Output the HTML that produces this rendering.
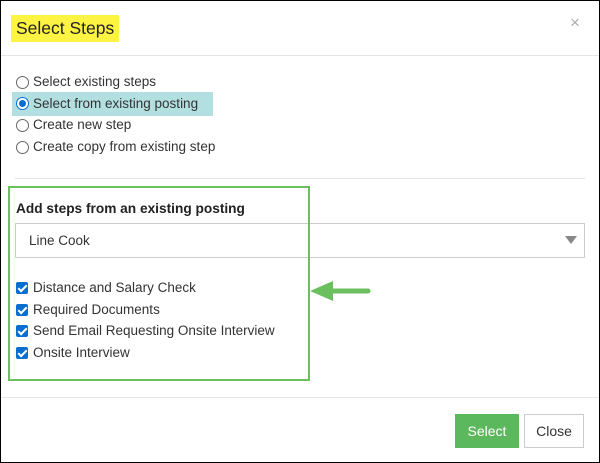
<!DOCTYPE html>
<html><head><style>
body{margin:0;width:600px;height:463px;overflow:hidden;font-family:"Liberation Sans",sans-serif;background:#fff;}
.frame{position:absolute;left:0;top:0;width:598px;height:461px;border:1px solid #000;}
.a{position:absolute;}
.t{font-size:13.5px;color:#333;}
.radio{position:absolute;width:11px;height:11px;border:1px solid #666;border-radius:50%;background:#fff;}
.cb{position:absolute;width:12px;height:12px;background:#0a6ed1;border-radius:2px;}
.cb:after{content:"";position:absolute;left:4px;top:1px;width:3px;height:7px;border:solid #fff;border-width:0 2px 2px 0;transform:rotate(45deg);}
</style></head><body>
<div class="frame"></div>
<div class="a" style="left:11px;top:15px;width:108px;height:27px;background:#fdf343;"></div>
<div class="a" style="left:16px;top:18px;font-size:17.5px;color:#222;">Select Steps</div>
<div class="a" style="left:570px;top:13px;font-size:17px;color:#aaa;">×</div>
<div class="a" style="left:1px;top:55px;width:598px;height:1px;background:#e5e5e5;"></div>
<div class="a" style="left:12px;top:92px;width:201px;height:24px;background:#b2dfe0;"></div>
<div class="radio" style="left:16px;top:76px"></div><div class="a t" style="left:33px;top:74px">Select existing steps</div>
<div class="radio" style="left:16px;top:97px;border-color:#0a6ed1"><div style="position:absolute;left:2px;top:2px;width:7px;height:7px;border-radius:50%;background:#0a6ed1"></div></div><div class="a t" style="left:33px;top:96px">Select from existing posting</div>
<div class="radio" style="left:16px;top:119px"></div><div class="a t" style="left:33px;top:117px">Create new step</div>
<div class="radio" style="left:16px;top:141px"></div><div class="a t" style="left:33px;top:139px">Create copy from existing step</div>
<div class="a" style="left:15px;top:178px;width:570px;height:1px;background:#e5e5e5;"></div>
<div class="a" style="left:16px;top:201px;font-size:13.7px;font-weight:bold;color:#222;">Add steps from an existing posting</div>
<div class="a" style="left:15px;top:223px;width:568px;height:33px;border:1px solid #ccc;"></div>
<div class="a t" style="left:29px;top:233px">Line Cook</div>
<div class="a" style="left:565px;top:236px;width:0;height:0;border-left:6px solid transparent;border-right:6px solid transparent;border-top:8px solid #888;"></div>
<div class="cb" style="left:16px;top:282px"></div><div class="a t" style="left:33px;top:280px">Distance and Salary Check</div>
<div class="cb" style="left:16px;top:304px"></div><div class="a t" style="left:33px;top:302px">Required Documents</div>
<div class="cb" style="left:16px;top:325px"></div><div class="a t" style="left:33px;top:323px">Send Email Requesting Onsite Interview</div>
<div class="cb" style="left:16px;top:347px"></div><div class="a t" style="left:33px;top:345px">Onsite Interview</div>
<div class="a" style="left:8px;top:186px;width:298px;height:191px;border:2px solid #6cbf5f;"></div>
<svg class="a" style="left:308px;top:280px" width="66" height="22"><path d="M60 11 H22" stroke="#6cbf5f" stroke-width="5" stroke-linecap="round"/><path d="M2 11 L25 1 L25 21 Z" fill="#6cbf5f"/></svg>
<div class="a" style="left:1px;top:397px;width:598px;height:1px;background:#e5e5e5;"></div>
<div class="a" style="left:455px;top:414px;width:64px;height:34px;background:#5cb85c;color:#fff;font-size:14px;line-height:34px;text-align:center;">Select</div>
<div class="a" style="left:524px;top:414px;width:58px;height:32px;border:1px solid #ccc;color:#333;font-size:14px;line-height:32px;text-align:center;">Close</div>
</body></html>
